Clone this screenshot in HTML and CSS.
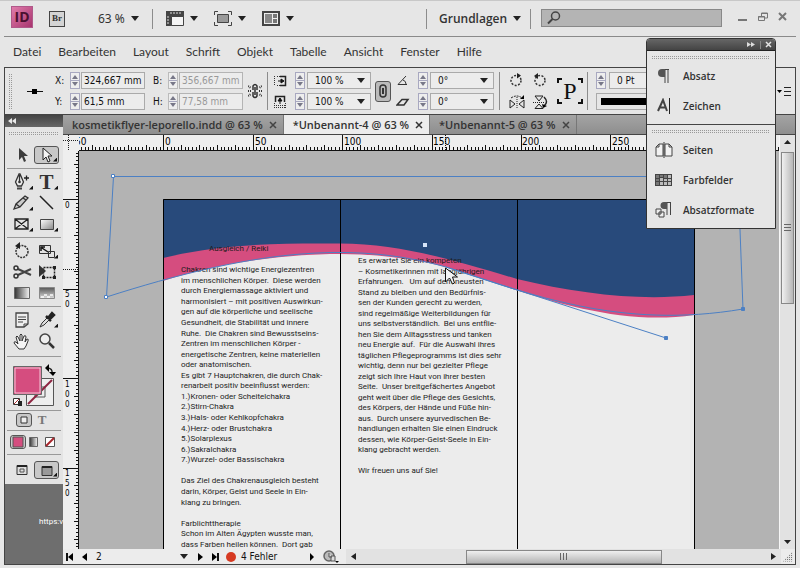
FILE: index.html
```html
<!DOCTYPE html>
<html lang="de">
<head>
<meta charset="utf-8">
<title>*Unbenannt-4 @ 63 %</title>
<link rel="stylesheet" href="styles.css">
</head>
<body>
<svg class="defs" aria-hidden="true">
  <defs>
    <linearGradient id="g-h"><stop offset="0" stop-color="#333"/><stop offset="1" stop-color="#f4f4f4"/></linearGradient>
    <linearGradient id="g-v" x2="0" y2="1"><stop offset="0" stop-color="#555"/><stop offset="1" stop-color="#ddd"/></linearGradient>
    <linearGradient id="g-d" x2="1" y2="1"><stop offset="0" stop-color="#fff"/><stop offset="1" stop-color="#888"/></linearGradient>
    <symbol id="rot-cw" viewBox="0 0 14 14"><circle cx="7" cy="7.500" r="5" fill="none" stroke="#333" stroke-width="1.500" stroke-dasharray="2 1.500"/><path d="M8 0l4 2.500-4 3z" fill="#222"/></symbol>
    <symbol id="rot-ccw" viewBox="0 0 14 14"><circle cx="7" cy="7.500" r="5" fill="none" stroke="#333" stroke-width="1.500" stroke-dasharray="2 1.500"/><path d="M5 0L1 3l4 3z" fill="#222"/></symbol>
  </defs>
</svg>
<div class="app">
  <header class="appbar">
    <span class="logo">ID</span>
    <button class="bridge" type="button">Br</button>
    <label class="drop zoom"><select aria-label="Zoomstufe"><option>63 %</option></select></label>
    <i class="rule"></i>
    <button class="drop view" type="button" aria-label="Anzeigeoptionen"><svg width="18" height="15"><path d="M0 0h18v6H6v9H0z" fill="#444"/><path d="M5.500 5.500h12v9h-12z" fill="#f4f4f4" stroke="#444"/><path d="M8 1v2M11 1v2M14 1v2M1 6h2M1 9h2M1 12h2M5 1v2" stroke="#ddd"/></svg></button>
    <button class="drop view" type="button" aria-label="Bildschirmmodus"><svg width="18" height="15"><path d="M.5 4V.5H4M14 .5h3.500V4M17.500 11v3.500H14M4 14.500H.5V11" fill="none" stroke="#444"/><path d="M3.500 3.500h11v8h-11z" fill="#999" stroke="#444"/></svg></button>
    <button class="drop view" type="button" aria-label="Dokumente anordnen"><svg width="18" height="15"><path d="M1 1h16v13H1z" fill="#eee" stroke="#444" stroke-width="2"/><path d="M3 3h7v9H3z" fill="#888"/><path d="M11 3h4v4h-4zM11 8h4v4h-4z" fill="#777"/></svg></button>
    <i class="rule push"></i>
    <label class="drop workspace"><select aria-label="Arbeitsbereich"><option>Grundlagen</option></select></label>
    <i class="rule"></i>
    <label class="search"><svg width="14" height="14"><circle cx="8.500" cy="5" r="4" fill="none" stroke="#444" stroke-width="1.500"/><path d="M5.500 8L1 12.500" stroke="#444" stroke-width="2"/></svg><input type="search" aria-label="Suchen"></label>
    <div class="winbtns">
      <button type="button" aria-label="Minimieren"><svg width="10" height="10"><path d="M0 8h9" stroke="#777" stroke-width="2"/></svg></button>
      <button type="button" aria-label="Wiederherstellen"><svg width="10" height="10"><path d="M3.500 4V1h6v5H7M.5 4.500h6v4h-6zM3 1.500h7M0 5h7" fill="none" stroke="#777"/></svg></button>
      <button type="button" aria-label="Schließen"><svg width="10" height="10"><path d="M1 1l7 7M8 1L1 8" stroke="#777" stroke-width="2"/></svg></button>
    </div>
  </header>

  <nav class="menu">
    <a href="#">Datei</a><a href="#">Bearbeiten</a><a href="#">Layout</a><a href="#">Schrift</a><a href="#">Objekt</a><a href="#">Tabelle</a><a href="#">Ansicht</a><a href="#">Fenster</a><a href="#">Hilfe</a>
  </nav>

  <section class="control">
    <i class="vgrip"></i>
    <svg class="refpoint" width="16" height="9"><path d="M0 4.500h16" stroke="#111"/><path d="M5 2h5v5H5z" fill="#000"/></svg>
    <div class="fields">
      <label for="fx">X:</label><i class="spin"></i><input id="fx" value="324,667 mm">
      <label for="fy">Y:</label><i class="spin"></i><input id="fy" value="61,5 mm">
    </div>
    <div class="fields off">
      <label for="fb">B:</label><i class="spin"></i><input id="fb" value="356,667 mm" disabled>
      <label for="fh">H:</label><i class="spin"></i><input id="fh" value="77,58 mm" disabled>
    </div>
    <svg class="chain" width="14" height="16"><path d="M5 7V3q2-3 4 0v4M5 9v4q2 3 4 0V9M7 4v8" fill="none" stroke="#333" stroke-width="1.500"/><path d="M0 3l3 2M0 8h3M0 13l3-2M14 3l-3 2M14 8h-3M14 13l-3-2" stroke="#333" stroke-dasharray="1 1" stroke-width="2"/></svg>
    <i class="rule"></i>
    <div class="fields pick">
      <svg width="14" height="14"><path d="M1.500 2v10M4 2.500h3M4 11.500h3" stroke="#333" stroke-dasharray="1 1"/><path d="M7 2.500h5.500v9H7" fill="none" stroke="#222" stroke-width="1.500"/><path d="M5 7h4M8 5l3 2-3 2z" fill="#111" stroke="#111"/></svg><i class="spin"></i><label class="drop"><select aria-label="X-Skalierung"><option>100 %</option></select></label>
      <svg width="14" height="14"><path d="M2.500 7V1.500h9V7" fill="none" stroke="#222" stroke-width="1.500"/><path d="M7 9V5M5 6l2-3 2 3z" fill="#111" stroke="#111"/><path d="M1 10.500h12M1 12.500h12M1.500 8v5M12.500 8v5" stroke="#333" stroke-dasharray="1 1"/></svg><i class="spin"></i><label class="drop"><select aria-label="Y-Skalierung"><option>100 %</option></select></label>
    </div>
    <button class="link" type="button" aria-label="Proportionen beibehalten"><svg width="8" height="14"><rect x="1" y="1" width="6" height="12" rx="3" fill="none" stroke="#333" stroke-width="1.500"/><path d="M4 4v6" stroke="#333" stroke-width="2"/></svg></button>
    <div class="fields pick angle">
      <svg width="14" height="14"><path d="M10 2L2 10.500h9M7 6q3 1 3 4" fill="none" stroke="#333"/></svg><i class="spin"></i><label class="drop"><select aria-label="Drehwinkel"><option>0°</option></select></label>
      <svg width="14" height="14"><path d="M1 10L6 4.500h6L8 10z" fill="none" stroke="#333" stroke-width="1.500"/></svg><i class="spin"></i><label class="drop"><select aria-label="Scherwinkel"><option>0°</option></select></label>
    </div>
    <i class="rule"></i>
    <div class="turns">
      <button type="button" aria-label="Im Uhrzeigersinn drehen"><svg width="14" height="14"><use href="#rot-cw"/></svg></button>
      <button type="button" aria-label="Gegen Uhrzeigersinn drehen"><svg width="14" height="14"><use href="#rot-ccw"/></svg></button>
      <button type="button" aria-label="Horizontal spiegeln"><svg width="16" height="14"><path d="M1 5v8l5-4zM15 5v8l-5-4z" fill="none" stroke="#222"/><path d="M8 2v12" stroke="#222" stroke-dasharray="1 1"/><path d="M2 3q6-4 11 0" fill="none" stroke="#222" stroke-dasharray="2 1"/><path d="M11 4h4V0z"/></svg></button>
      <button type="button" aria-label="Vertikal spiegeln"><svg width="16" height="14"><path d="M2 1h8L6 6zM2 13.500h8L6 9z" fill="none" stroke="#222"/><path d="M0 7.500h12" stroke="#222" stroke-dasharray="1 1"/><path d="M11 2q5 5 0 9" fill="none" stroke="#222" stroke-width="1.500"/><path d="M9 9l1 4 4-2z"/></svg></button>
    </div>
    <div class="pmark"><svg width="26" height="26"><path d="M1 5V1h4M21 1h4v4M25 21v4h-4M5 25H1v-4" fill="none" stroke="#111" stroke-width="2"/></svg><span>P</span></div>
    <i class="rule"></i>
    <div class="stroke">
      <div class="weight"><i class="spin"></i><input aria-label="Konturstärke" value="0 Pt"></div>
      <div class="line"></div>
    </div>
    <button class="flyout" type="button" aria-label="Bedienfeldmenü"><svg width="15" height="10"><path d="M0 4h5L2.500 7z"/><path d="M7 1.500h7M7 5.500h7M7 9.500h7" stroke="#222"/></svg></button>
  </section>

  <div class="work">
    <aside class="tools">
      <div class="toolhead"><svg width="9" height="7"><path d="M4 0v6L0 3zM8 0v6L4 3z" fill="#e8e8e8"/></svg></div>
      <div class="toolbody">
        <i class="hgrip"></i>
        <div class="set">
          <button type="button" aria-label="Auswahl"><svg width="22" height="18"><path d="M8 2v12l3-3 2 5 2-1-2-5h4z" fill="#3c3c3c"/></svg></button>
          <button class="on more" type="button" aria-label="Direktauswahl"><svg width="22" height="18"><path d="M7 1v12l3-3 2 5 2-1-2-5h4z" fill="#f4f4f4" stroke="#222"/></svg></button>
        </div>
        <div class="set">
          <button class="more" type="button" aria-label="Zeichenstift"><svg width="22" height="18"><path d="M8 1L4.500 9l2 4h4l2-4L9 1zM8.500 2v7" fill="#eee" stroke="#333" stroke-width="1.300"/><circle cx="8.500" cy="9" r="1.300" fill="#333"/><path d="M6 14.500h5v2H6z" fill="#444"/><path d="M13 5h5M15.500 2.500v5" stroke="#222" stroke-width="1.300"/></svg></button>
          <button class="more serif" type="button">T</button>
          <button class="more" type="button" aria-label="Buntstift"><svg width="22" height="18"><path d="M3 15l2-5 9-8 3 2-8 9zM5 10l4 3M12 4l3 2" fill="#ccc" stroke="#333" stroke-width="1.300"/></svg></button>
          <button type="button" aria-label="Linie"><svg width="22" height="18"><path d="M4 2l13 13" stroke="#222" stroke-width="1.500"/></svg></button>
          <button class="more" type="button" aria-label="Rechteckrahmen"><svg width="22" height="18"><path d="M4 4h13v10H4zM4 4l13 10M17 4L4 14" fill="none" stroke="#222" stroke-width="1.300"/></svg></button>
          <button class="more" type="button" aria-label="Rechteck"><svg width="22" height="18"><path d="M4.500 4.500h13v10h-13z" fill="url(#g-d)" stroke="#444"/></svg></button>
        </div>
        <div class="set">
          <button type="button" aria-label="Drehen"><svg width="22" height="18"><circle cx="11" cy="9.500" r="6" fill="none" stroke="#333" stroke-width="1.500" stroke-dasharray="2 1"/><path d="M9 0L4 4l5 3z" fill="#222"/></svg></button>
          <button class="more" type="button" aria-label="Skalieren"><svg width="22" height="18"><path d="M3.500 3.500h11v8h-11zM12.500 9.500h6v6h-6z" fill="none" stroke="#333"/><path d="M6 6l6 4M5 9V5h4" fill="none" stroke="#111" stroke-width="1.500"/></svg></button>
          <button type="button" aria-label="Schere"><svg width="22" height="18"><path d="M7 6l13 6M7 12l13-6" stroke="#444" stroke-width="2"/><circle cx="5" cy="5" r="2" fill="none" stroke="#333" stroke-width="1.500"/><circle cx="5" cy="13" r="2" fill="none" stroke="#333" stroke-width="1.500"/></svg></button>
          <button type="button" aria-label="Frei transformieren"><svg width="22" height="18"><path d="M7.500 4.500h11v10h-11z" fill="none" stroke="#222" stroke-width="1.500" stroke-dasharray="2 1"/><path d="M3 2v12l7-6z" fill="#333"/><path d="M17 3h3v3h-3zM17 13h3v3h-3zM6 13h3v3H6z" fill="#222"/></svg></button>
          <button type="button" aria-label="Verlaufsfarbfeld"><svg width="22" height="18"><path d="M3.500 3.500h15v11h-15z" fill="url(#g-h)" stroke="#666"/></svg></button>
          <button type="button" aria-label="Weiche Verlaufskante"><svg width="22" height="18"><path d="M3.500 3.500h15v11h-15z" fill="url(#g-v)" stroke="#888"/><path d="M5 12h3v2H5zM11 12h3v2h-3zM8 10h3v2H8zM14 10h3v2h-3z" fill="#fff" opacity=".7"/></svg></button>
        </div>
        <div class="set roomy">
          <button type="button" aria-label="Notiz"><svg width="22" height="18"><path d="M5 2h12v11l-4 3H5z" fill="#eee" stroke="#444" stroke-width="1.300"/><path d="M7 6h8M7 8.500h8M7 11h5M13 16v-3h4" fill="none" stroke="#444"/></svg></button>
          <button class="more" type="button" aria-label="Pipette"><svg width="22" height="18"><path d="M4 16l2-4 6-6 2 2-6 6z" fill="#ddd" stroke="#333"/><path d="M10 5l5 5M12 7l4-5 2 2-4 4z" stroke="#222" stroke-width="2.500" fill="#222"/></svg></button>
          <button type="button" aria-label="Hand"><svg width="22" height="18"><path d="M8 17L3 11q0-2 2-1l2 2-2-7q1-2 2 0l2 4V3q1-2 2 0v6l2-5q2-1 2 1l-1 5 2-3q2 0 1 2l-2 5-2 3z" fill="#f4f4f4" stroke="#333"/></svg></button>
          <button type="button" aria-label="Zoom"><svg width="22" height="18"><circle cx="9" cy="7" r="5" fill="#eee" stroke="#444" stroke-width="1.500"/><path d="M13 11l5 5" stroke="#333" stroke-width="2.500"/></svg></button>
        </div>
        <div class="set swatches">
          <svg width="50" height="46"><path d="M17.500 18.500h27v27h-27zM26 27h10v10H26z" fill="#eee" stroke="#555"/><path d="M19 44l24-24" stroke="#8e2440" stroke-width="2"/><path d="M4.500 6.500h28v28h-28z" fill="#d54d7f" stroke="#666"/><path d="M6 8h25v25H6z" fill="none" stroke="#f3c8d8"/><path d="M38 8q6 0 5 6" fill="none" stroke="#222" stroke-width="1.500"/><path d="M36 8l4-4v8zM40 12h7l-3 4z"/><path d="M4.500 38.500h6v6h-6z" fill="#fff" stroke="#333"/><path d="M9 41h4v5H9z" fill="#222"/><path d="M5 44l5-5" stroke="#a33"/></svg>
        </div>
        <div class="set modes targets">
          <button class="on" type="button" aria-label="Formatierung wirkt sich auf Container aus"><svg width="12" height="10"><path d="M3 2h6v6H3z" fill="#eee" stroke="#333"/></svg></button>
          <button class="dim" type="button">T</button>
        </div>
        <div class="set modes">
          <button class="on" type="button" aria-label="Farbe anwenden"><svg width="12" height="12"><path d="M1 1h10v10H1z" fill="#d54d7f" stroke="#555"/></svg></button>
          <button type="button" aria-label="Verlauf anwenden"><svg width="10" height="10"><path d="M.5.5h8v9h-8z" fill="url(#g-h)" stroke="#666"/></svg></button>
          <button type="button" aria-label="Keine anwenden"><svg width="11" height="10"><path d="M.5.5h9v9h-9z" fill="#fff" stroke="#555"/><path d="M1 9l8-8" stroke="#a8262c" stroke-width="2"/></svg></button>
        </div>
        <div class="set last">
          <button type="button" aria-label="Normal"><svg width="22" height="18"><path d="M6 4.500h10v9H6z" fill="#ddd" stroke="#333"/><path d="M6 5h10" stroke="#222" stroke-width="2"/><path d="M9 8h4v3H9z" fill="none" stroke="#555"/></svg></button>
          <button class="on more" type="button" aria-label="Vorschau"><svg width="22" height="18"><path d="M6 4.500h10v9H6z" fill="#999" stroke="#333"/><path d="M6 5h10" stroke="#222" stroke-width="2"/></svg></button>
        </div>
      </div>
      <p class="mark">https:v</p>
    </aside>

    <main class="doc">
      <div class="tabs">
        <div class="tab">kosmetikflyer-leporello.indd @ 63 %<button type="button" aria-label="Schließen"><svg width="8" height="8"><path d="M1 1l6 6M7 1L1 7" stroke="#444" stroke-width="1.500"/></svg></button></div>
        <div class="tab active">*Unbenannt-4 @ 63 %<button type="button" aria-label="Schließen"><svg width="8" height="8"><path d="M1 1l6 6M7 1L1 7" stroke="#333" stroke-width="1.500"/></svg></button></div>
        <div class="tab">*Unbenannt-5 @ 63 %<button type="button" aria-label="Schließen"><svg width="8" height="8"><path d="M1 1l6 6M7 1L1 7" stroke="#444" stroke-width="1.500"/></svg></button></div>
      </div>
      <div class="pane">
        <svg class="corner" width="16" height="16"><path d="M0 5.500h16M5.500 0v16" stroke="#222" stroke-dasharray="1 1"/></svg>
        <svg class="rulerx">
          <g shape-rendering="crispEdges" stroke="#111">
            <path d="M-5 13.500h900" stroke-width="3" stroke-dasharray="1 2.576"/>
            <path d="M-5 12.500h900" stroke-width="5" stroke-dasharray="1 16.880"/>
            <path d="M-5 8h900" stroke-width="16" stroke-dasharray="1 88.400"/>
            <path d="M366.500 0v16" stroke-dasharray="1 1"/>
            <path d="M0 15.500h900"/>
          </g>
          <text x="-4" y="10">50</text><text x="86" y="10">0</text><text x="176" y="10">50</text><text x="265" y="10">100</text><text x="354" y="10">150</text><text x="443" y="10">200</text><text x="533" y="10">250</text>
        </svg>
        <svg class="rulery">
          <g shape-rendering="crispEdges" stroke="#111">
            <path d="M14 -41v900" stroke-width="3" stroke-dasharray="1 2.576"/>
            <path d="M13 -41v900" stroke-width="5" stroke-dasharray="1 16.880"/>
            <path d="M8 -41v900" stroke-width="16" stroke-dasharray="1 88.400"/>
            <path d="M0 118.500h16" stroke-dasharray="1 1"/>
            <path d="M15.500 0v900"/>
          </g>
          <text x="2" y="57">0</text>
          <text x="2" y="146">5</text><text x="2" y="156">0</text>
          <text x="2" y="236">1</text><text x="2" y="246">0</text><text x="2" y="256">0</text>
          <text x="2" y="325">1</text><text x="2" y="335">5</text><text x="2" y="345">0</text>
        </svg>
        <div class="canvas">
          <svg class="art"><g transform="translate(-79 -151)">
            <path d="M163 199h532v400H163z" fill="#ececec"/>
            <path d="M163 199V281C230 259 300 254 340 254 C380 254 420 260 446 267 C530 294 610 327 694 315V199z" fill="#d54d7f"/>
            <path d="M163 199V258C220 244 280 243 340 243.500 C400 244 450 259 517 279 C580 294 640 301 694 295V199z" fill="#284a7b"/>
            <path d="M163.500 600V199.500h531V600M340.500 199v400M517.500 199v400" fill="none" stroke="#000"/>
          </g></svg>
          <div class="frame one">
            <span class="indent">Ausgleich / Reiki</span><span>&nbsp;</span>
            <span>Chakren sind wichtige Energiezentren</span><span>im menschlichen Körper.&nbsp; Diese werden</span><span>durch Energiemassage aktiviert und</span><span>harmonisiert – mit positiven Auswirkun-</span><span>gen auf die körperliche und seelische</span><span>Gesundheit, die Stabilität und innere</span><span>Ruhe.&nbsp; Die Chakren sind Bewusstseins-</span><span>Zentren im menschlichen Körper -</span><span>energetische Zentren, keine materiellen</span><span>oder anatomischen.</span>
            <span>Es gibt 7 Hauptchakren, die durch Chak-</span><span>renarbeit positiv beeinflusst werden:</span><span>1.)Kronen- oder Scheitelchakra</span><span>2.)Stirn-Chakra</span><span>3.)Hals- oder Kehlkopfchakra</span><span>4.)Herz- oder Brustchakra</span><span>5.)Solarplexus</span><span>6.)Sakralchakra</span><span>7.)Wurzel- oder Bassischakra</span><span>&nbsp;</span>
            <span>Das Ziel des Chakrenausgleich besteht</span><span>darin, Körper, Geist und Seele in Ein-</span><span>klang zu bringen.</span><span>&nbsp;</span>
            <span>Farblichttherapie</span><span>Schon im Alten Ägypten wusste man,</span><span>dass Farben heilen können.&nbsp; Dort gab</span>
          </div>
          <div class="frame two">
            <span>Es erwartet Sie ein kompeten</span><span>– Kosmetikerinnen mit langjährigen</span><span>Erfahrungen.&nbsp;&nbsp; Um auf dem neusten</span><span>Stand zu bleiben und den Bedürfnis-</span><span>sen der Kunden gerecht zu werden,</span><span>sind regelmäßige Weiterbildungen für</span><span>uns selbstverständlich.&nbsp; Bei uns entflie-</span><span>hen Sie dem Alltagsstress und tanken</span><span>neu Energie auf.&nbsp; Für die Auswahl ihres</span><span>täglichen Pflegeprogramms ist dies sehr</span><span>wichtig, denn nur bei gezielter Pflege</span><span>zeigt sich Ihre Haut von ihrer besten</span><span>Seite.&nbsp; Unser breitgefächertes Angebot</span><span>geht weit über die Pflege des Gesichts,</span><span>des Körpers, der Hände und Füße hin-</span><span>aus.&nbsp; Durch unsere ayurvedischen Be-</span><span>handlungen erhalten Sie einen Eindruck</span><span>dessen, wie Körper-Geist-Seele in Ein-</span><span>klang gebracht werden.</span><span>&nbsp;</span><span>Wir freuen uns auf Sie!</span>
          </div>
          <svg class="art"><g transform="translate(-79 -151)">
            <path d="M106.500 297L113.500 176.500H738L743 309C620 330 530 294 446 267 C350 240 250 251 106.500 297M446 267L666 338" fill="none" stroke="#4c80c4"/>
            <g fill="#fff" stroke="#4c80c4"><path d="M111.500 174.500h3v3h-3zM104.500 295.500h3v3h-3z"/><path d="M741.500 307.500h3v3h-3zM664.500 336.500h3v3h-3z" fill="#4c80c4"/></g>
            <path d="M423 243h4v4h-4z" fill="#d6e4f8"/>
            <path d="M445.500 268v14l4-4 3 6 2-1-2-6h5z" fill="#f4f4f4" stroke="#111"/>
          </g></svg>
        </div>
        <div class="vbar"><i class="up"></i><i class="thumb"></i><i class="down"></i></div>
      </div>
      <footer class="status">
        <button type="button" aria-label="Erste Seite"><svg width="8" height="8"><path d="M1 0v8" stroke="#111" stroke-width="2"/><path d="M7 0v8L2 4z"/></svg></button>
        <button type="button" aria-label="Vorherige Seite"><svg width="8" height="8"><path d="M6 0v8L1 4z"/></svg></button>
        <label class="drop page"><select aria-label="Seite"><option>2</option></select></label>
        <button type="button" aria-label="Nächste Seite"><svg width="8" height="8"><path d="M2 0v8l5-4z"/></svg></button>
        <button type="button" aria-label="Letzte Seite"><svg width="8" height="8"><path d="M7 0v8" stroke="#111" stroke-width="2"/><path d="M1 0v8l5-4z"/></svg></button>
        <span class="errors">4 Fehler</span>
        <button type="button" aria-label="Preflight-Menü"><svg width="8" height="8"><path d="M2 0v8l4-4z"/></svg></button>
        <button type="button" aria-label="Versionsverlauf"><svg width="16" height="14"><circle cx="6" cy="6" r="5" fill="#bbb" stroke="#666" stroke-width="1.500"/><path d="M6 3v4h3M8 6h4v5H8z" fill="#ddd" stroke="#555"/><path d="M12 11h4l-2 2z"/></svg></button>
        <div class="hbar"><i class="left"></i><i class="thumb"></i><i class="right"></i></div>
        <i class="size"></i>
      </footer>
    </main>
  </div>
</div>

<aside class="palette">
  <div class="palhead"><svg width="9" height="7"><path d="M0 1v5l4-2.500zM4 1v5l4-2.500z" fill="#ddd"/></svg><i></i><svg width="7" height="7"><path d="M1 1l5 5M6 1L1 6" stroke="#e4e4e4" stroke-width="1.500"/></svg></div>
  <div class="group">
    <i class="hgrip"></i>
    <button type="button"><svg width="18" height="16"><path d="M10 1v14M13 1v14M9 1.500h5" stroke="#444" fill="none"/><path d="M10 1H7a4 4 0 0 0 0 8h3z" fill="#555"/></svg>Absatz</button>
    <button type="button"><svg width="18" height="16"><path d="M3 13L8 2l4 11M5 9.500h6" fill="none" stroke="#444" stroke-width="2"/><path d="M14.500 0v16" stroke="#222"/></svg>Zeichen</button>
  </div>
  <div class="group">
    <i class="hgrip"></i>
    <button type="button"><svg width="18" height="16"><path d="M1 5l3-3h4v12H1zM17 5l-3-3h-4v12h7zM1 5h3V2M17 5h-3V2" fill="#f2f2f2" stroke="#444"/><path d="M9 0v16" stroke="#333"/></svg>Seiten</button>
    <button type="button"><svg width="18" height="14"><path d="M0 1h17v12H0z" fill="#444"/><path d="M5 5h3v3H5zM9 6h3v2H9zM13 2h3v3h-3zM13 6h3v2h-3zM9 9h3v3H9zM13 9h3v3h-3zM5 9h3v3H5z" fill="#bbb"/><path d="M1 2h3v3H1zM5 2h3v2H5zM9 2h3v3H9zM1 6h3v2H1zM1 9h3v3H1z" fill="#777"/></svg>Farbfelder</button>
    <button type="button"><svg width="18" height="16"><path d="M12 0v13M15.500 0v13M11 .5h5" stroke="#444" fill="none"/><path d="M12 0H9a3 3 0 0 0 0 7h3z" fill="#555"/><path d="M4 10h5v5H4zM1 7h5v5H1z" fill="#eee" stroke="#444"/></svg>Absatzformate</button>
  </div>
</aside>
</body>
</html>
```
FILE: styles.css
```css
* { box-sizing: border-box; }
html, body { height: 100%; margin: 0; }
body {
  background: #e6e6e6;
  color: #333;
  font: 12px/16px "Noto Sans", "Open Sans", sans-serif;
  overflow: hidden;
}
i { display: block; flex: none; }
svg { display: block; flex: none; }
.defs { position: absolute; width: 0; height: 0; }
button, input, select {
  appearance: none;
  margin: 0;
  padding: 0;
  border: 0;
  background: none;
  color: inherit;
  font: inherit;
}
input:focus, select:focus { outline: 1px solid #4c80c4; }
a { color: inherit; text-decoration: none; }

.app {
  display: flex;
  flex-direction: column;
  height: 100vh;
  padding: 0 4px 3px;
  border-top: 1px solid #c8c8c8;
}

/* Application bar */
.appbar {
  display: flex;
  align-items: center;
  height: 36px;
  padding: 0 8px 0 7px;
  border-bottom: 1px solid #8a8a8a;
}
.logo {
  width: 22px;
  height: 22px;
  margin: 0 16px 4px 0;
  background: linear-gradient(135deg, #e07cab, #a8346e);
  border: 1px solid #b0598a;
  color: #4a1030;
  font: bold 14px/19px "Open Sans", sans-serif;
  text-align: center;
}
.bridge {
  width: 16px;
  height: 16px;
  margin-right: 33px;
  border: 1px solid #444;
  background: #d4d4d4;
  font: bold 9px/13px "Liberation Serif", serif;
  text-align: center;
}
.rule { width: 1px; height: 20px; background: #8c8c8c; }
.drop { display: flex; align-items: center; }
.drop::after {
  content: "";
  flex: none;
  width: 8px;
  height: 5px;
  background: #222;
  clip-path: polygon(0 0, 100% 0, 50% 100%);
  pointer-events: none;
}
.drop select { min-width: 0; }
.zoom { margin-right: 13px; }
.zoom select { width: 33px; }
.view { gap: 6px; margin-left: 13px; }
.view + .view { margin-left: 16px; }
.push { margin-left: auto; }
.workspace { margin: 0 9px 0 12px; font-family: "Open Sans", sans-serif; font-weight: 600; }
.workspace select { width: 74px; }
.search {
  display: flex;
  align-items: center;
  width: 181px;
  height: 18px;
  margin: 0 16px 2px 10px;
  padding-left: 5px;
  border: 1px solid #888;
  background: #b4b4b4;
}
.search input { flex: 1; min-width: 0; }
.winbtns { display: flex; gap: 10px; margin-bottom: 4px; }

.menu {
  display: flex;
  align-items: center;
  gap: 17px;
  height: 30px;
  padding-left: 9px;
  font-family: Lato, "Open Sans", sans-serif;
}

/* Control panel */
.control {
  display: flex;
  align-items: center;
  height: 47px;
  border: solid #444;
  border-width: 1px 1px 0;
  font: 10px/15px "DejaVu Sans Condensed", "DejaVu Sans", sans-serif;
  color: #111;
}
.control .rule { height: 38px; }
.vgrip, .hgrip {
  background:
    repeating-linear-gradient(#e6e6e6 0 1px, transparent 1px 2px),
    repeating-linear-gradient(90deg, #999 0 1px, #e6e6e6 1px 2px);
}
.vgrip { width: 3px; height: 36px; margin: 0 15px 0 4px; }
.hgrip { height: 5px; margin: 0 2px; }
.refpoint { margin-right: 12px; }
.fields {
  display: grid;
  grid-template-columns: 14px 10px 64px;
  grid-auto-rows: 17px;
  gap: 4px 1px;
  align-items: center;
}
.fields + .fields { margin-left: 8px; }
.fields input, .fields .drop, .weight input {
  width: 100%;
  height: 17px;
  padding: 0 0 0 2px;
  border: 1px solid #aaa;
  background: #ececec;
}
.fields .drop { padding: 0 5px 0 7px; justify-content: space-between; }
.fields .drop select { flex: 1; }
.off input { color: #999; border-color: #b4b4b4; }
.pick { grid-template-columns: 20px 10px 64px; column-gap: 2px; }
.spin {
  position: relative;
  width: 10px;
  height: 17px;
  border: 1px solid #a8a8c0;
  background: linear-gradient(#a8a8c0, #a8a8c0) 0 7px / 100% 1px no-repeat #eee;
}
.spin::before, .spin::after {
  content: "";
  position: absolute;
  left: 1px;
  width: 6px;
  height: 4px;
  background: #778;
}
.spin::before { top: 2px; clip-path: polygon(50% 0, 100% 100%, 0 100%); }
.spin::after { bottom: 2px; clip-path: polygon(0 0, 100% 0, 50% 100%); }
.off .spin { border-color: #bbb; }
.chain { margin: 0 5px; }
.control .pick { margin-left: 5px; }
.link {
  display: grid;
  place-items: center;
  width: 16px;
  height: 21px;
  margin-left: 4px;
  border: 1px solid #555;
  border-radius: 3px;
  background: #bbb;
}
.angle { margin-right: 5px; }
.turns {
  display: grid;
  grid-template-columns: 16px 16px;
  gap: 8px;
  margin: 0 8px 0 9px;
}
.turns button { height: 14px; }
.pmark { display: grid; place-items: center; margin-right: 4px; }
.pmark > * { grid-area: 1 / 1; }
.pmark span { font: 24px/26px "Liberation Serif", serif; }
.stroke { flex: 1; margin: 0 12px 0 8px; }
.weight { display: flex; gap: 3px; }
.weight input { padding-left: 7px; }
.line { height: 17px; margin-top: 4px; padding: 4px; border: 1px solid #aaa; background: #000 content-box; }
.flyout { margin: 0 3px 0 0; }

/* Work area */
.work { display: flex; flex: 1; min-height: 0; border: 1px solid #444; }
.tools { display: flex; flex-direction: column; width: 58px; background: #6e6e6e; overflow: hidden; }
.toolhead { height: 12px; padding: 3px; background: linear-gradient(#444, #666); }
.toolbody { padding: 4px 2px 0; background: #e4e4e4; }
.set {
  display: grid;
  grid-template-columns: 25px 25px;
  grid-auto-rows: 21px;
  justify-content: center;
  align-items: center;
  padding: 2px 0 3px;
  border-bottom: 1px solid #999;
}
.hgrip + .set { padding-top: 8px; }
.set button { position: relative; display: grid; place-items: center; height: 18px; }
.set .more::after {
  content: "";
  position: absolute;
  right: 1px;
  bottom: 1px;
  width: 4px;
  height: 4px;
  background: #111;
  clip-path: polygon(100% 0, 100% 100%, 0 100%);
}
.set .on { border: 1px solid #555; border-radius: 3px; background: #c8c8c8; }
.set .serif { font: bold 21px/18px "Liberation Serif", serif; }
.roomy { padding-bottom: 5px; }
.swatches { grid-auto-rows: 48px; grid-template-columns: 50px; }
.modes { grid-template-columns: 16px 16px 16px; grid-auto-rows: 18px; }
.targets { grid-template-columns: 16px 20px; grid-auto-rows: 14px; }
.modes button { height: 14px; }
.modes .dim { color: #777; font: bold 13px/14px "Liberation Serif", serif; }
.last { border: 0; padding: 4px 0; }
.mark {
  margin: 30px 0 0 34px;
  color: #fff;
  font: 8px/16px Roboto, sans-serif;
  white-space: nowrap;
}

/* Document window */
.doc { display: flex; flex: 1; flex-direction: column; min-width: 0; background: #e6e6e6; }
.tabs {
  display: flex;
  height: 20px;
  background: linear-gradient(#a4a4a4, #8e8e8e);
  border-bottom: 1px solid #444;
}
.tab {
  display: flex;
  align-items: center;
  gap: 6px;
  padding: 0 6px 0 9px;
  border-right: 1px solid #777;
  font: 600 11px/19px "Open Sans", sans-serif;
  white-space: nowrap;
}
.active { background: #ececec; }
.pane {
  display: grid;
  grid-template: 16px minmax(0, 1fr) / 16px minmax(0, 1fr) 16px;
  flex: 1;
  min-height: 0;
}
.corner, .rulerx, .rulery { background: #eee; }
.rulerx, .rulery { width: 100%; height: 100%; overflow: hidden; font: 10px "DejaVu Sans Condensed", sans-serif; }
.rulerx { height: 16px; }
.rulery { grid-area: 2 / 1; font-size: 8px; }
.canvas { position: relative; grid-area: 2 / 2; background: #b3b3b3; overflow: hidden; }
.art { position: absolute; inset: 0; width: 100%; height: 100%; }
/* Text frames are vertically justified: lines share the frame's height evenly. */
.frame {
  position: absolute;
  display: flex;
  flex-direction: column;
  justify-content: space-between;
  color: #1c1c1c;
  font: 8px/10px Roboto, "Liberation Sans", sans-serif;
  white-space: nowrap;
}
.one { left: 102px; top: 93px; height: 306px; }
.two { left: 279px; top: 105px; height: 220px; }
.indent { padding-left: 28px; }

.vbar {
  display: flex;
  flex-direction: column;
  align-items: center;
  grid-area: 1 / 3 / 3;
  padding: 5px 0;
  border-left: 1px solid #f6f6f6;
  background: #e2e2e2;
}
.up, .down { width: 7px; height: 4px; background: #222; }
.up { clip-path: polygon(50% 0, 100% 100%, 0 100%); }
.down { margin-top: auto; clip-path: polygon(0 0, 100% 0, 50% 100%); }
.thumb { border: 1px solid #888; }
.vbar .thumb {
  width: 13px;
  height: 152px;
  margin-top: 8px;
  background:
    repeating-linear-gradient(#666 0 1px, transparent 1px 3px) 50% 50% / 7px 9px no-repeat,
    linear-gradient(90deg, #f0f0f0, #b8b8b8);
}

.status {
  display: flex;
  align-items: center;
  height: 15px;
  padding-left: 3px;
  background: #ececec;
  font: 10px/14px "DejaVu Sans Condensed", "DejaVu Sans", sans-serif;
  color: #111;
}
.status button { margin-right: 7px; }
.page { width: 92px; margin: 0 8px 0 0; }
.page select { flex: 1; }
.errors { display: flex; align-items: center; gap: 5px; width: 82px; }
.errors::before { content: ""; width: 10px; height: 10px; border-radius: 50%; background: #d63a22; }
.hbar { display: flex; flex: 1; align-items: center; align-self: stretch; padding: 0 5px; background: #e2e2e2; }
.left, .right { width: 5px; height: 7px; background: #222; }
.left { clip-path: polygon(0 50%, 100% 0, 100% 100%); }
.right { margin-left: auto; clip-path: polygon(0 0, 100% 50%, 0 100%); }
.hbar .thumb {
  width: 196px;
  height: 14px;
  margin-left: 110px;
  background:
    repeating-linear-gradient(90deg, #666 0 1px, transparent 1px 3px) 50% 50% / 9px 7px no-repeat,
    linear-gradient(#efefef, #b4b4b4);
}
.size {
  width: 10px;
  height: 10px;
  margin: 0 2px;
  background:
    repeating-linear-gradient(#e6e6e6 0 1px, transparent 1px 2px),
    repeating-linear-gradient(90deg, #777 0 1px, #e6e6e6 1px 2px);
  clip-path: polygon(100% 0, 100% 100%, 0 100%);
}

/* Floating palette */
.palette {
  position: absolute;
  top: 38px;
  right: 24px;
  width: 130px;
  border: 1px solid #333;
  border-radius: 4px 4px 0 0;
  background: #e6e6e6;
}
.palhead {
  display: flex;
  align-items: center;
  justify-content: flex-end;
  gap: 4px;
  height: 12px;
  padding-right: 3px;
  border-bottom: 1px solid #222;
  border-radius: 3px 3px 0 0;
  background: linear-gradient(#666, #444);
}
.palhead i { width: 1px; height: 8px; background: #888; }
.group { padding: 4px 3px 3px; }
.group + .group { border-top: 1px solid #444; }
.group .hgrip { margin-bottom: 1px; }
.group button {
  display: flex;
  align-items: center;
  gap: 10px;
  width: 100%;
  height: 30px;
  padding-left: 5px;
  font: 600 10px/16px "Open Sans", sans-serif;
}
```
